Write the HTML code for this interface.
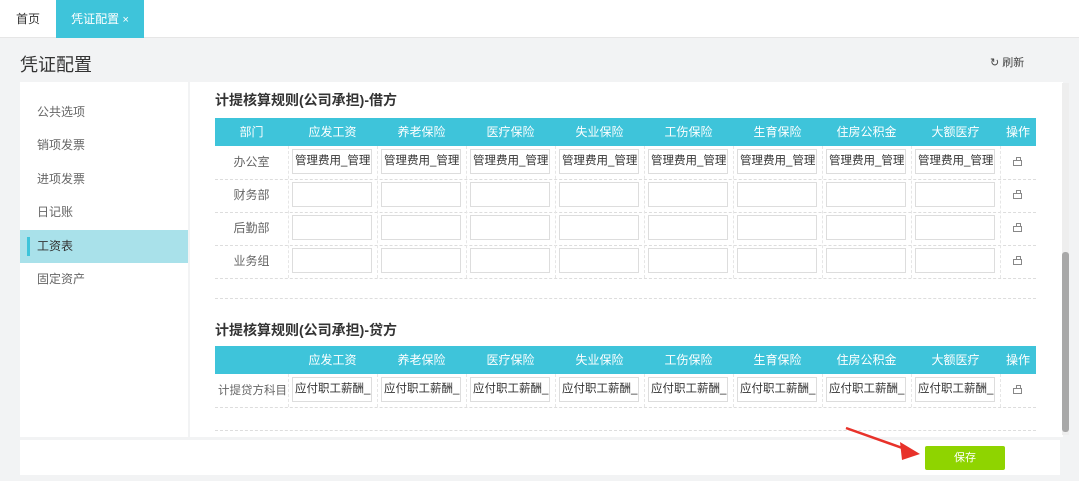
<!DOCTYPE html><html><head><meta charset="utf-8"><style>
*{margin:0;padding:0;box-sizing:border-box}
body{width:1079px;height:481px;background:#f2f3f4;font-family:"Liberation Sans","Noto Sans CJK SC",sans-serif;position:relative;overflow:hidden;color:#555}
.a{position:absolute}
.tabs{left:0;top:0;width:1079px;height:38px;background:#fff;border-bottom:1px solid #e6e6e6}
.tab{top:0;height:38px;line-height:38px;font-size:12px;text-align:center}
.menu div{position:absolute;left:0;width:168px;height:33px;line-height:33px;padding-left:17px;font-size:12px;color:#666}
.hd{height:28px;background:#3ec4da;color:#fff;font-size:12px;line-height:28px}
.hd span{position:absolute;top:0;text-align:center}
.in{position:absolute;width:80px;height:25px;border:1px solid #ddd;background:#fff;font-size:11.5px;line-height:23px;padding-left:2px;color:#333;white-space:nowrap;overflow:hidden}
.lbl{position:absolute;width:73px;text-align:center;font-size:12px;color:#666}
.dash{position:absolute;left:215px;width:821px;border-top:1px dashed #ddd}
.vd{position:absolute;border-left:1px dashed #e6e6e6}
.ic{position:absolute;width:9px;height:6px;border:1px solid #888}
.ic:before{content:"";position:absolute;left:2px;top:-4px;width:3px;height:3px;border:1px solid #888;border-bottom:none}
h3{position:absolute;left:215px;font-size:14px;font-weight:bold;color:#333}
</style></head><body>
<div class="a tabs"></div>
<div class="a tab" style="left:0;width:56px;color:#333">首页</div>
<div class="a tab" style="left:56px;width:88px;background:#3ec4da;color:#fff">凭证配置 <span style="font-size:11px">×</span></div>
<div class="a" style="left:20px;top:51px;font-size:18px;color:#333">凭证配置</div>
<div class="a" style="left:990px;top:54px;font-size:11px;color:#444">↻ 刷新</div>
<div class="a menu" style="left:20px;top:82px;width:168px;height:355px;background:#fff">
<div style="top:14px">公共选项</div><div style="top:47px">销项发票</div><div style="top:81px">进项发票</div><div style="top:114px">日记账</div>
<div style="top:148px;background:#a9e1ea;color:#333">工资表<i style="position:absolute;left:7px;top:7px;width:3px;height:19px;background:#3ec4da"></i></div>
<div style="top:181px">固定资产</div></div>
<div class="a" style="left:190px;top:82px;width:873px;height:355px;background:#fff"></div>
<div class="a" style="left:1062px;top:83px;width:7px;height:352px;background:#eee"></div>
<div class="a" style="left:1062px;top:252px;width:7px;height:180px;background:#a8a8a8;border-radius:3px"></div>
<h3 style="top:90px">计提核算规则(公司承担)-借方</h3>
<div class="a hd" style="left:215px;top:118px;width:821px">
<span style="left:0;width:73px">部门</span><span style="left:73px;width:89px">应发工资</span><span style="left:162px;width:89px">养老保险</span><span style="left:251px;width:89px">医疗保险</span><span style="left:340px;width:89px">失业保险</span><span style="left:429px;width:89px">工伤保险</span><span style="left:518px;width:89px">生育保险</span><span style="left:607px;width:89px">住房公积金</span><span style="left:696px;width:89px">大额医疗</span><span style="left:785px;width:36px">操作</span></div>
<div class="lbl" style="left:215px;top:153px">办公室</div><div class="lbl" style="left:215px;top:186px">财务部</div><div class="lbl" style="left:215px;top:219px">后勤部</div><div class="lbl" style="left:215px;top:252px">业务组</div>
<div class="dash" style="top:179px"></div><div class="dash" style="top:212px"></div><div class="dash" style="top:245px"></div><div class="dash" style="top:278px"></div><div class="dash" style="top:298px"></div>
<div class="dash" style="top:407px"></div><div class="dash" style="top:430px"></div>
<div id="g"></div>
<h3 style="top:320px">计提核算规则(公司承担)-贷方</h3>
<div class="a hd" style="left:215px;top:346px;width:821px">
<span style="left:73px;width:89px">应发工资</span><span style="left:162px;width:89px">养老保险</span><span style="left:251px;width:89px">医疗保险</span><span style="left:340px;width:89px">失业保险</span><span style="left:429px;width:89px">工伤保险</span><span style="left:518px;width:89px">生育保险</span><span style="left:607px;width:89px">住房公积金</span><span style="left:696px;width:89px">大额医疗</span><span style="left:785px;width:36px">操作</span></div>
<div class="lbl" style="left:215px;top:382px;font-size:11.5px;width:75px">计提贷方科目</div>
<script>
var g='',xs=[288,377,466,555,644,733,822,911];
xs.forEach(function(x){
g+='<div class="in" style="left:'+(x+4)+'px;top:149px">管理费用_管理</div>';
[182,215,248].forEach(function(y){g+='<div class="in" style="left:'+(x+4)+'px;top:'+y+'px"></div>'});
g+='<div class="in" style="left:'+(x+4)+'px;top:377px">应付职工薪酬_</div>';
g+='<div class="vd" style="left:'+x+'px;top:146px;height:132px"></div><div class="vd" style="left:'+x+'px;top:374px;height:33px"></div>';
});
g+='<div class="vd" style="left:1000px;top:146px;height:132px"></div><div class="vd" style="left:1000px;top:374px;height:33px"></div>';
[160,193,226,259,388].forEach(function(y){g+='<div class="ic" style="left:1013px;top:'+y+'px"></div>'});
document.getElementById('g').innerHTML=g;
</script>
<div class="a" style="left:20px;top:440px;width:1040px;height:35px;background:#fff"></div>
<div class="a" style="left:925px;top:446px;width:80px;height:24px;background:#8fd400;border-radius:2px;color:#fff;font-size:11px;text-align:center;line-height:24px">保存</div>
<svg class="a" style="left:840px;top:420px" width="90" height="45"><line x1="6" y1="8" x2="68" y2="30" stroke="#e8322a" stroke-width="2.5"/><polygon points="80,34 60,22 62,40" fill="#e8322a"/></svg>
</body></html>
